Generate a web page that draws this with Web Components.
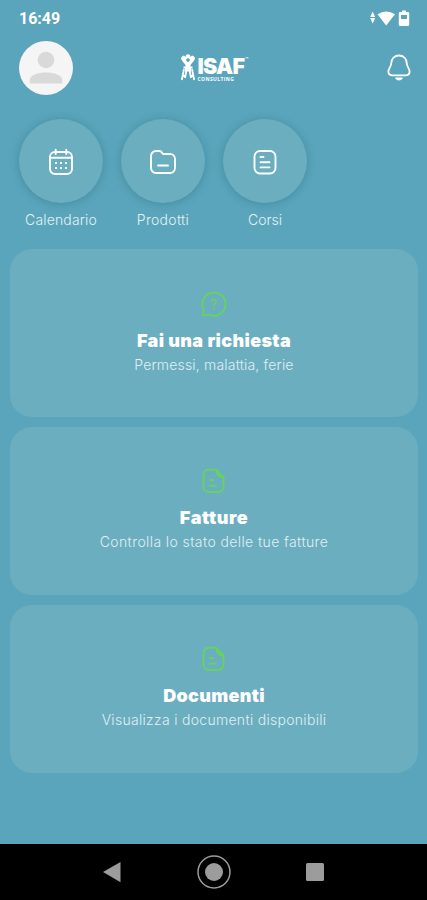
<!DOCTYPE html>
<html lang="it">
<head>
<meta charset="UTF-8">
<meta name="viewport" content="width=device-width, initial-scale=1">
<title>ISAF Consulting</title>
<style>
  body {
    margin: 0;
    background: #5aa5bb;
    color: #fff;
    font-family: Inter, "Work Sans", sans-serif;
  }
</style>
</head>
<body>
<isaf-app></isaf-app>

<script>
const icons = {
  calendar: `
    <rect x="3" y="4" width="22" height="22" rx="5"/>
    <path d="M3 9.7H25M8.7 1.8V6M19.3 1.8V6" />
    <path stroke-width="2" stroke-linecap="butt" d="M8 15h2M13 15h2M18 15h2M8 20h2M13 20h2M18 20h2"/>`,
  folder: `
    <path d="M2 8a5 5 0 0 1 5-5h3.2a3 3 0 0 1 2.3 1.1L14 6h7a5 5 0 0 1 5 5v9a5 5 0 0 1-5 5H7a5 5 0 0 1-5-5z"/>
    <path d="M9 17.5H19"/>`,
  list: `
    <rect x="3.5" y="3" width="21" height="22.5" rx="5.5"/>
    <path d="M9.5 9H12.5M9.5 14.2H18.5M9.5 19.4H18.5"/>`,
  question: `
    <path d="M2.7 25.2L3.6 19.5A11.6 11.6 0 1 1 9 24.7Z"/>
    <path stroke-width="1.5" d="M11.8 11.3C11.8 8.3 16.6 8.6 16.2 11.6C15.9 13.5 14 13.6 14 16M14 18.8V19.2"/>`,
  document: `
    <path d="M16 2.8H8.5a5 5 0 0 0-5 5v12.2a5 5 0 0 0 5 5H18.5a5 5 0 0 0 5-5V10.5z"/>
    <path fill="currentColor" stroke-width="1.5" d="M16 2.8C16 8 18 10.5 23.5 10.5Z"/>
    <path d="M9.8 13H13.2M9.8 18.7H16.2"/>`
};

class StatusBar extends HTMLElement {
  connectedCallback() {
    this.attachShadow({ mode: 'open' });
    this.shadowRoot.innerHTML = `
      <style>
        :host {
          display: flex;
          justify-content: space-between;
          align-items: center;
          box-sizing: border-box;
          height: 36px;
          padding: 0 16px 0 19px;
          font: 700 16px Roboto, sans-serif;
        }
        svg { display: block; margin-top: -1px; }
      </style>
      <span>16:49</span>
      <svg width="42" height="18" viewBox="0 0 42 18" fill="#fff">
        <path d="M3.7 2.5L6.2 8H1.2ZM3.7 14.5L6.2 9H1.2Z"/>
        <path d="M8.5 5.2Q17.2-.4 26 5.2L17.2 16.5Z"/>
        <path fill-rule="evenodd" d="M33 1.5h4v1.5h2a1.2 1.2 0 0 1 1.2 1.2v11.5a1.2 1.2 0 0 1-1.2 1.2h-8a1.2 1.2 0 0 1-1.2-1.2v-11.5a1.2 1.2 0 0 1 1.2-1.2h2zM32 6v4h6V6z"/>
      </svg>
    `;
  }
}

class IsafLogo extends HTMLElement {
  connectedCallback() {
    this.attachShadow({ mode: 'open' });
    this.shadowRoot.innerHTML = `
      <style>
        :host { display: flex; gap: 2px; width: 71px; height: 30px; }
        svg { flex: none; }
        .words { padding-top: 4px; }
        .name {
          display: flex;
          align-items: flex-start;
          height: 18px;
          font-weight: 900;
          font-size: 21.5px;
          line-height: 18px;
          letter-spacing: -0.7px;
          white-space: nowrap;
        }
        .mark { font: 700 4px/4px "Open Sans", sans-serif; letter-spacing: 0; margin-left: 1px; }
        .tag { font: 700 5px/6px "Open Sans", sans-serif; letter-spacing: 0.4px; margin-top: 1px; }
      </style>
      <svg width="16" height="30" viewBox="0 0 16 30" fill="#fff">
        <path fill-rule="evenodd" d="M6 2Q8 .5 10 2L10.500 4L12 2.500Q15 3 15 6L12.500 9.500L10.500 12V13.500H12.500V15.500H3.500V13.500H5.500V12L3.500 9.500L1 6Q1 3 4 2.500L5.500 4ZM8 5.200a1.800 1.800 0 1 0 .01 0z"/>
        <path d="M5 15h6v3.500H5z"/>
        <path fill="none" stroke="#fff" stroke-width="1.800" d="M4 16L1.800 27M6.500 17L5 25M9.500 17L11 25M12 16L14.200 27M2.500 23H5.500M10.500 23H13.500"/>
      </svg>
      <div class="words">
        <div class="name">ISAF<span class="mark">™</span></div>
        <div class="tag">CONSULTING</div>
      </div>
    `;
  }
}

class AppHeader extends HTMLElement {
  connectedCallback() {
    this.attachShadow({ mode: 'open' });
    this.shadowRoot.innerHTML = `
      <style>
        :host {
          display: grid;
          grid-template-columns: 1fr auto 1fr;
          align-items: center;
          padding: 5px 15px 0 18px;
        }
        svg { display: block; }
        .avatar { margin-left: 1px; }
        .bell { justify-self: end; }
      </style>
      <svg class="avatar" width="54" height="54" viewBox="0 0 54 54">
        <circle cx="27" cy="27" r="27" fill="#f5f5f5"/>
        <circle cx="27" cy="19" r="8.3" fill="#d9d9d9"/>
        <path d="M10.8 42.5V39C10.8 29 43.2 29 43.2 39V42.5Z" fill="#d9d9d9"/>
      </svg>
      <isaf-logo></isaf-logo>
      <svg class="bell" width="26" height="30" viewBox="0 0 26 30" fill="none" stroke="#fff" stroke-width="1.8" stroke-linejoin="round">
        <path d="M13 2.5C8.5 2.5 5.5 5.5 5.3 10C5.2 14 2.4 15.5 2.4 18.5C2.4 21 4 22.3 6.5 22.3H19.5C22 22.3 23.6 21 23.6 18.5C23.6 15.5 20.8 14 20.7 10C20.5 5.5 17.5 2.5 13 2.5Z"/>
        <path d="M9.5 25C11 27.6 15 27.6 16.5 25Z" fill="#fff" stroke-width="1"/>
      </svg>
    `;
  }
}

class ShortcutButton extends HTMLElement {
  connectedCallback() {
    this.attachShadow({ mode: 'open' });
    this.shadowRoot.innerHTML = `
      <style>
        :host {
          display: flex;
          flex-direction: column;
          align-items: center;
          width: 84px;
        }
        .circle {
          display: grid;
          place-items: center;
          box-sizing: border-box;
          width: 84px;
          height: 84px;
          padding-top: 1px;
          border-radius: 50%;
          background: #6aaec0;
          box-shadow: 0 1px 8px rgba(20, 75, 100, 0.3);
        }
        svg { fill: none; stroke: #fff; stroke-width: 1.9; stroke-linecap: round; stroke-linejoin: round; }
        .label {
          margin-top: 8px;
          font-size: 14px;
          line-height: 18px;
          font-weight: 300;
          color: #e4f1f5;
          letter-spacing: var(--label-spacing, 0);
          white-space: nowrap;
        }
      </style>
      <div class="circle"><svg width="28" height="28" viewBox="0 0 28 28">${icons[this.getAttribute('icon')]}</svg></div>
      <div class="label"><slot></slot></div>
    `;
  }
}

class ActionCard extends HTMLElement {
  connectedCallback() {
    this.attachShadow({ mode: 'open' });
    this.shadowRoot.innerHTML = `
      <style>
        :host {
          display: flex;
          flex-direction: column;
          align-items: center;
          box-sizing: border-box;
          height: 168px;
          padding-top: var(--card-top, 40px);
          border-radius: 22px;
          background: #6aaec0;
        }
        svg { fill: none; color: #67d163; stroke: currentColor; stroke-width: 2; stroke-linecap: round; stroke-linejoin: round; }
        .title {
          margin-top: 11px;
          font-size: 18px;
          line-height: 24px;
          font-weight: 900;
          letter-spacing: var(--title-spacing, 0);
        }
        .text {
          margin-top: 3px;
          font-size: 14px;
          line-height: 18px;
          font-weight: 300;
          color: #e0eff4;
          letter-spacing: var(--text-spacing, 0);
        }
      </style>
      <svg width="28" height="28" viewBox="0 0 28 28">${icons[this.getAttribute('icon')]}</svg>
      <div class="title"><slot name="title"></slot></div>
      <div class="text"><slot></slot></div>
    `;
  }
}

class SystemNav extends HTMLElement {
  connectedCallback() {
    this.attachShadow({ mode: 'open' });
    this.shadowRoot.innerHTML = `
      <style>
        :host {
          display: flex;
          justify-content: center;
          align-items: center;
          gap: 67px;
          height: 56px;
          background: #000;
        }
        svg { display: block; fill: #9c9c9c; }
      </style>
      <svg width="34" height="34" viewBox="0 0 34 34"><path d="M7 17L24.5 7V27.3Z"/></svg>
      <svg width="34" height="34" viewBox="0 0 34 34">
        <circle cx="17" cy="17" r="16" fill="none" stroke="#9c9c9c" stroke-width="1.5"/>
        <circle cx="17" cy="17" r="9"/>
      </svg>
      <svg width="34" height="34" viewBox="0 0 34 34"><rect x="8" y="8" width="18" height="18" rx="1.5"/></svg>
    `;
  }
}

class IsafApp extends HTMLElement {
  connectedCallback() {
    this.attachShadow({ mode: 'open' });
    this.shadowRoot.innerHTML = `
      <style>
        :host {
          display: flex;
          flex-direction: column;
          height: 100vh;
          overflow: hidden;
        }
        .shortcuts { display: flex; gap: 18px; padding: 24px 19px 0; }
        .cards { display: grid; gap: 10px; padding: 20px 9px 0 10px; }
        system-nav { margin-top: auto; }
      </style>
      <status-bar></status-bar>
      <app-header></app-header>
      <div class="shortcuts">
        <shortcut-button icon="calendar" style="--label-spacing: 0.15px">Calendario</shortcut-button>
        <shortcut-button icon="folder" style="--label-spacing: 0.3px">Prodotti</shortcut-button>
        <shortcut-button icon="list">Corsi</shortcut-button>
      </div>
      <div class="cards">
        <action-card icon="question" style="--card-top: 41px; --title-spacing: 0.35px; --text-spacing: 0.18px">
          <span slot="title">Fai una richiesta</span>Permessi, malattia, ferie
        </action-card>
        <action-card icon="document" style="--title-spacing: 0.55px; --text-spacing: 0.4px">
          <span slot="title">Fatture</span>Controlla lo stato delle tue fatture
        </action-card>
        <action-card icon="document" style="--title-spacing: 0.3px; --text-spacing: 0.3px">
          <span slot="title">Documenti</span>Visualizza i documenti disponibili
        </action-card>
      </div>
      <system-nav></system-nav>
    `;
  }
}

customElements.define('status-bar', StatusBar);
customElements.define('isaf-logo', IsafLogo);
customElements.define('app-header', AppHeader);
customElements.define('shortcut-button', ShortcutButton);
customElements.define('action-card', ActionCard);
customElements.define('system-nav', SystemNav);
customElements.define('isaf-app', IsafApp);
</script>
</body>
</html>
